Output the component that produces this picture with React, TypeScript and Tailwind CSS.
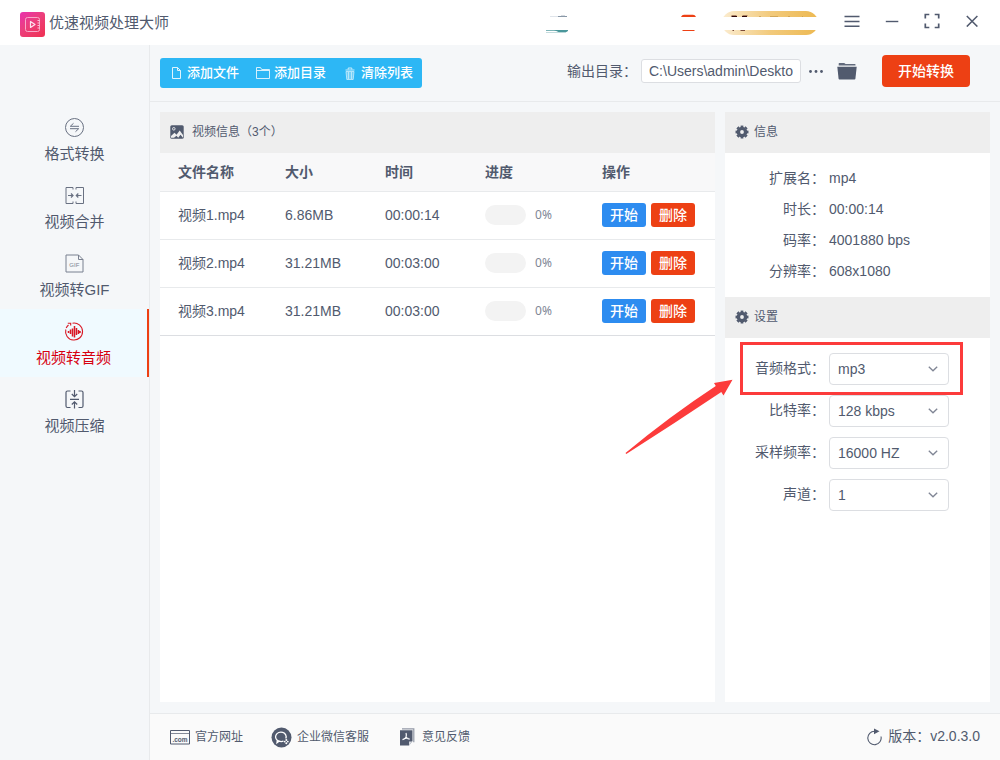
import { useState } from "react"
import type { ReactNode } from "react"
import clsx from "clsx"

const sidebarItems = [
  { name: "格式转换", icon: <ConvertIcon /> },
  { name: "视频合并", icon: <MergeIcon /> },
  { name: "视频转GIF", icon: <GifIcon /> },
  { name: "视频转音频", icon: <AudioIcon /> },
  { name: "视频压缩", icon: <CompressIcon /> },
]

const files = [
  { name: "视频1.mp4", size: "6.86MB", time: "00:00:14", progress: 0 },
  { name: "视频2.mp4", size: "31.21MB", time: "00:03:00", progress: 0 },
  { name: "视频3.mp4", size: "31.21MB", time: "00:03:00", progress: 0 },
]

const info = [
  { label: "扩展名", value: "mp4" },
  { label: "时长", value: "00:00:14" },
  { label: "码率", value: "4001880 bps" },
  { label: "分辨率", value: "608x1080" },
]

const settings = [
  { id: "format", label: "音频格式", options: ["mp3", "wav", "aac", "flac"], highlight: true },
  { id: "bitrate", label: "比特率", options: ["128 kbps", "192 kbps", "320 kbps"] },
  { id: "rate", label: "采样频率", options: ["16000 HZ", "44100 HZ", "48000 HZ"] },
  { id: "channel", label: "声道", options: ["1", "2"] },
]

export default function App() {
  const [active, setActive] = useState("视频转音频")

  return (
    <div className="flex min-h-screen flex-col bg-[#f5f7f9] font-['Liberation_Sans','Noto_Sans_CJK_SC',sans-serif] text-sm text-[#515a6e]">
      <TitleBar />
      <div className="flex flex-1">
        <nav className="w-[150px] shrink-0 border-r border-[#e8eaec] pt-[60px]">
          {sidebarItems.map((item) => (
            <button
              key={item.name}
              onClick={() => setActive(item.name)}
              className={clsx(
                "flex h-[68px] w-full flex-col items-center gap-[5px] pt-3 text-[15px] leading-6",
                active === item.name && "border-r-2 border-[#ed4014] bg-[#f0faff] text-[#d7000f]"
              )}
            >
              {item.icon}
              {item.name}
            </button>
          ))}
        </nav>

        <div className="flex min-w-0 flex-1 flex-col">
          <Toolbar />
          <main className="flex flex-1 gap-2.5 px-2.5 pt-2.5 pb-[11px]">
            <FilePanel />
            <aside className="w-[265px] shrink-0 bg-white">
              <PanelHeader icon={<GearIcon />} gap="gap-[5px]">信息</PanelHeader>
              <dl className="pt-[9px] pb-[11px]">
                {info.map((row) => (
                  <div key={row.label} className="flex h-[31px] items-center gap-1">
                    <dt className="w-[100px] text-right">{row.label}：</dt>
                    <dd>{row.value}</dd>
                  </div>
                ))}
              </dl>
              <PanelHeader icon={<GearIcon />} gap="gap-[5px]">设置</PanelHeader>
              <div className="flex flex-col gap-2.5 pt-[15px]">
                {settings.map((row) => (
                  <SettingRow key={row.id} {...row} />
                ))}
              </div>
            </aside>
          </main>
          <Footer />
        </div>
      </div>
    </div>
  )
}

function TitleBar() {
  return (
    <header className="flex h-[45px] items-center bg-white pr-2 pl-5">
      <Logo />
      <h1 className="ml-1 text-[15px]">优速视频处理大师</h1>
      <HeaderBadges />
      <button aria-label="菜单" className="flex h-10 w-10 items-center justify-center pb-1">
        <svg width="16" height="12" viewBox="0 0 16 12" stroke="currentColor" strokeWidth="1.4">
          <path d="M.5 1.500h15M.5 6.500h15M.5 11.300h15" />
        </svg>
      </button>
      <button aria-label="最小化" className="flex h-10 w-10 items-center justify-center pb-1">
        <svg width="14" height="12" viewBox="0 0 14 12" stroke="currentColor" strokeWidth="1.4">
          <path d="M.8 6.500h12.500" />
        </svg>
      </button>
      <button aria-label="全屏" className="flex h-10 w-10 items-center justify-center pb-1">
        <svg width="16" height="16" viewBox="0 0 16 16" fill="none" stroke="currentColor" strokeWidth="1.7">
          <path d="M1.300 5.500V1.500h4M10.700 1.500h4v4M14.700 10.500v4h-4M5.300 14.500h-4v-4" />
        </svg>
      </button>
      <button aria-label="关闭" className="flex h-10 w-10 items-center justify-center pb-1">
        <svg width="12" height="12" viewBox="0 0 12 12" stroke="currentColor" strokeWidth="1.5">
          <path d="M.8 1l10.600 10.600M11.400 1L.8 11.600" />
        </svg>
      </button>
    </header>
  )
}

// account area: avatar, red tag and gold pill, with a blank strip across them
function HeaderBadges() {
  return (
    <svg className="mr-3.5 ml-auto" width="272" height="24" viewBox="0 0 272 24">
      <defs>
        <linearGradient id="gold">
          <stop offset="0" stopColor="#fbecd0" />
          <stop offset=".5" stopColor="#f2ca7c" />
          <stop offset="1" stopColor="#edb952" />
        </linearGradient>
      </defs>
      <path d="M4 5.500h8" stroke="#dfe4ea" />
      <path d="M12 5.500h9" stroke="#8796a6" />
      <path d="M15 4.700h4" stroke="#a9b4c0" strokeWidth=".6" />
      <path d="M0 19.500h22" stroke="#7fb5b8" />
      <path d="M8 19h14q0 2-3 2.300h-6z" fill="#4a979b" />
      <path d="M0 21.500h20" stroke="#b5d3d5" strokeWidth=".8" />
      <path d="M135 6q1-2.200 3-2.200h9q2 0 3 2.200z" fill="#ed4014" />
      <path d="M136 19h13l-1 1h-11z" fill="#ed4014" />
      <rect x="176" width="96" height="24" rx="12" fill="url(#gold)" />
      <path d="M185.500 4.600h5M196.500 4.600h5" stroke="#8a5a40" strokeWidth=".8" />
      <path d="M185.500 5.500h5.500M196 5.500h5" stroke="#2d0508" />
      <path d="M186.500 19.500h1.500M194.500 19.500h4.500" stroke="#6d3a2c" strokeWidth=".9" />
      <path d="M213 5.500h2M224 5.500h8M242 5.500h2M256 5.500h1" stroke="#c59a4a" strokeWidth=".7" />
      <rect x="170" y="6" width="102" height="13" fill="#fff" />
    </svg>
  )
}

function Toolbar() {
  return (
    <div className="flex h-[57px] items-center justify-between border-b border-[#e8eaec] pr-[30px] pl-2.5">
      <div className="flex h-[30px] items-center rounded-[3px] bg-[#2db7f5] text-[13px] font-medium text-white">
        <button className="flex h-full items-center gap-1.5 pr-2 pl-3">
          <svg width="9" height="12" viewBox="0 0 9 12" fill="none" stroke="currentColor" opacity=".85">
            <path d="M.5.5h5l3 3v8h-8zM5.500.5v3h3" />
          </svg>
          添加文件
        </button>
        <button className="flex h-full items-center gap-1 px-[9px]">
          <svg width="14" height="12" viewBox="0 0 14 12" fill="none" stroke="currentColor" opacity=".8">
            <path d="M.5 11.500V.5h4l1.200 2h7.800v9zM.5 3.500h13" />
          </svg>
          添加目录
        </button>
        <button className="flex h-full items-center gap-1.5 pr-[9px] pl-2.5">
          <svg width="10" height="13" viewBox="0 0 10 13" fill="none" stroke="currentColor" opacity=".75">
            <path d="M.5 3h9M3.200 2.500V1h3.600v1.500" />
            <path d="M1 4.500h8l-.8 8H1.800z" fill="currentColor" fillOpacity=".45" strokeWidth=".8" />
            <path d="M3.500 5v7M6.500 5v7" strokeWidth=".8" />
          </svg>
          清除列表
        </button>
      </div>

      <div className="flex items-center pb-1">
        <label htmlFor="output">输出目录：</label>
        <input
          id="output"
          className="ml-1 h-6 w-40 rounded-[3px] border border-[#dcdee2] bg-white px-[7px] text-sm"
          defaultValue="C:\Users\admin\Deskto"
        />
        <button aria-label="更多" className="ml-[7px]">
          <svg width="16" height="4" viewBox="0 0 16 4" fill="currentColor">
            <circle cx="2.500" cy="2.500" r="1.400" />
            <circle cx="8" cy="2.500" r="1.400" />
            <circle cx="13.500" cy="2.500" r="1.400" />
          </svg>
        </button>
        <button aria-label="打开目录" className="ml-[13px]">
          <svg width="20" height="18" viewBox="0 0 20 18" fill="currentColor">
            <path d="M1.700 3.500V1.500Q1.700 1 2.200 1h5L8.600 2H18q.5 0 .5.5v1z" opacity=".9" />
            <path d="M.3 4.700h19.400L18.400 16.700q-.1.700-.8.700H2.400q-.7 0-.8-.7z" />
          </svg>
        </button>
        <button className="ml-[25px] h-8 w-[88px] rounded bg-[#ed4014] font-medium text-white">开始转换</button>
      </div>
    </div>
  )
}

function PanelHeader({ icon, gap, children }: { icon: ReactNode; gap: string; children: ReactNode }) {
  return (
    <h2 className={clsx("flex h-[41px] items-center bg-[#eee] px-2.5 pb-0.5 text-xs", gap)}>
      {icon}
      {children}
    </h2>
  )
}

function FilePanel() {
  return (
    <section className="min-w-0 flex-1 bg-white">
      <PanelHeader icon={<PictureIcon />} gap="gap-2">
        <span>视频信息（{files.length}个）</span>
      </PanelHeader>
      <table className="w-full table-fixed text-left">
        <colgroup>
          <col className="w-[107px]" />
          <col className="w-[100px]" />
          <col className="w-[100px]" />
          <col className="w-[117px]" />
          <col />
        </colgroup>
        <thead>
          <tr className="h-[38px] border-b border-[#e8eaec] bg-[#f8f8f9]">
            {["文件名称", "大小", "时间", "进度", "操作"].map((title) => (
              <th key={title} className="pl-[18px] font-bold">{title}</th>
            ))}
          </tr>
        </thead>
        <tbody>
          {files.map((file) => (
            <tr key={file.name} className="h-12 border-b border-[#e8eaec] last:border-[#dcdee2]">
              <td className="pl-[18px]">{file.name}</td>
              <td className="pl-[18px]">{file.size}</td>
              <td className="pl-[18px]">{file.time}</td>
              <td className="pl-[18px]">
                <div className="flex items-center gap-[9px]">
                  <div className="h-5 w-[41px] overflow-hidden rounded-full bg-[#f3f3f3]">
                    <div className="h-full bg-[#2d8cf0]" style={{ width: `${file.progress}%` }} />
                  </div>
                  <span className="font-['Noto_Sans',sans-serif] text-xs text-[#808695]">{file.progress}%</span>
                </div>
              </td>
              <td className="pl-[18px]">
                <div className="flex gap-[5px] font-medium text-white">
                  <button className="h-6 w-11 rounded-[3px] bg-[#2d8cf0]">开始</button>
                  <button className="h-6 w-11 rounded-[3px] bg-[#ed4014]">删除</button>
                </div>
              </td>
            </tr>
          ))}
        </tbody>
      </table>
    </section>
  )
}

type SettingRowProps = { id: string; label: string; options: string[]; highlight?: boolean }

function SettingRow({ id, label, options, highlight }: SettingRowProps) {
  return (
    <div className="relative flex items-center gap-1">
      <label htmlFor={id} className="w-[100px] pb-0.5 text-right">{label}：</label>
      <div className="relative">
        <select
          id={id}
          className="h-8 w-[120px] appearance-none rounded border border-[#dcdee2] bg-white px-2 text-sm"
        >
          {options.map((option) => (
            <option key={option}>{option}</option>
          ))}
        </select>
        <svg className="pointer-events-none absolute top-3 right-2.5" width="12" height="8" viewBox="0 0 12 8" fill="none" stroke="#808695" strokeWidth="1.300">
          <path d="M1.800 1.700L6 5.800l4.200-4.100" />
        </svg>
      </div>
      {highlight && (
        <div className="pointer-events-none absolute -top-[11px] -bottom-2.5 right-[27px] left-[15px] z-10 border-3 border-[#fc3b3b]">
          {/* arrow pointing at the box */}
          <svg className="absolute top-[34px] right-full mr-2.5" width="108" height="76" viewBox="0 0 108 76" fill="#fc3b3b">
            <path d="M107.500.8L89 4l1.800 3Q45 37 .5 74l.8 1Q50 44 96.300 13l2.200 3.500z" />
          </svg>
        </div>
      )}
    </div>
  )
}

function Footer() {
  return (
    <footer className="flex h-[47px] items-center border-t border-[#e8eaec] bg-[#fafafa] px-5 text-xs">
      <a href="#site" className="flex items-center gap-[5px]">
        <svg width="20" height="16" viewBox="0 0 20 16" fill="none" stroke="currentColor">
          <path d="M.5 1.500h19v13.500H.5z" />
          <path d="M.5 4.500h19" opacity=".7" />
          <text x="10" y="12.500" textAnchor="middle" fontSize="6.500" fontWeight="bold" fill="currentColor" stroke="none">.com</text>
        </svg>
        官方网址
      </a>
      <a href="#service" className="ml-7 flex items-center gap-[5px]">
        <svg width="21" height="21" viewBox="0 0 21 21" fill="none">
          <circle cx="10.500" cy="10.500" r="10" fill="currentColor" />
          <path d="M14.800 11.500A5.300 4.700 0 1 0 8 14.200l-2 1.600.3-2.400M8 14.200q2.200.8 4.500 0" stroke="#fff" strokeWidth="1.300" />
          <circle cx="15.300" cy="12.900" r="1" fill="#fff" />
          <circle cx="13.700" cy="14.600" r=".9" fill="#fff" />
          <circle cx="16.800" cy="14.600" r=".9" fill="#fff" />
          <circle cx="15.300" cy="16.200" r="1" fill="#fff" />
        </svg>
        企业微信客服
      </a>
      <a href="#feedback" className="ml-[30px] flex items-center gap-[7px]">
        <svg width="16" height="18" viewBox="0 0 16 18" fill="none">
          <path d="M3 .8h11.800v13.500" stroke="#9298a6" strokeWidth="1.200" />
          <path d="M1 2.200h12.500v10.800l-3.500 4.500H1z" fill="currentColor" />
          <path d="M10 17.500v-4h3.500z" fill="#d5d8de" />
          <path d="M7 5q.8 2.500 0 4.200T3.500 11.700M7 9q1 1.800 3.700 2.200M5 10.700q2-.8 4.200-.4" stroke="#fff" strokeWidth="1.200" />
        </svg>
        意见反馈
      </a>
      <button className="ml-auto flex items-center gap-1.5 pb-0.5 text-sm">
        <svg className="mt-0.5" width="15" height="18" viewBox="0 0 15 18" fill="none" stroke="currentColor" strokeWidth="1.100">
          <path d="M14 8.500a6.700 6.700 0 1 1-6.300-5.200" />
          <path d="M7 .5l5.500 2.800-5.500 3z" fill="currentColor" stroke="none" />
        </svg>
        版本：v2.0.3.0
      </button>
    </footer>
  )
}

function Logo() {
  return (
    <svg className="mt-1" width="25" height="25" viewBox="0 0 25 25" fill="none">
      <defs>
        <linearGradient id="logo" x1="0" y1="0" x2=".8" y2="1">
          <stop offset="0" stopColor="#e832ae" />
          <stop offset=".5" stopColor="#ec3f7c" />
          <stop offset="1" stopColor="#ef3358" />
        </linearGradient>
      </defs>
      <rect width="25" height="25" rx="3" fill="url(#logo)" />
      <rect x="5.500" y="5.500" width="14" height="14" rx="2" stroke="#f9a9c9" />
      <path d="M10.500 9.500v6l4.500-3z" stroke="#fde3ee" strokeWidth="1.200" strokeLinejoin="round" />
      <path d="M17.500 8.500h2M17.500 11h2M17.500 13.500h2M17.500 16h2" stroke="#fbc4d9" />
    </svg>
  )
}

function ConvertIcon() {
  return (
    <svg width="20" height="20" viewBox="0 0 20 20" fill="none" stroke="currentColor" opacity=".85">
      <circle cx="9.500" cy="10.500" r="9" />
      <path d="M14 9.300H5.300l3.200-3M5 11.700h8.700l-3.200 3" />
    </svg>
  )
}

function MergeIcon() {
  return (
    <svg width="20" height="20" viewBox="0 0 20 20" fill="none" stroke="currentColor" opacity=".85">
      <path d="M8 4.500v-2H1v16h7v-2M11 4.500v-2h7.500v16H11v-2" />
      <path d="M3 10.500h4.800M6 8.500l2 2-2 2M16.500 10.500h-5M13.300 8.500l-2 2 2 2" strokeWidth="1.200" />
    </svg>
  )
}

function GifIcon() {
  return (
    <svg width="20" height="20" viewBox="0 0 20 20" fill="none" stroke="currentColor" opacity=".75">
      <path d="M1 2h12.500l4.500 4.500V19H1zM13.500 2v4.500H18" />
      <text x="9.300" y="14" textAnchor="middle" fontSize="6" fill="currentColor" stroke="none">GIF</text>
    </svg>
  )
}

function AudioIcon() {
  return (
    <svg width="20" height="20" viewBox="0 0 20 20" fill="none" stroke="currentColor" strokeWidth="1.100" opacity=".9">
      <path d="M8.500 2.200A8.500 8.500 0 1 1 1.800 8.500" />
      <path d="M2.200 7A9 9 0 0 1 4.500 4M3.800 2.200h2.900v2.300" />
      <path d="M4.500 10v2M6.500 8.500v4.500M8.500 7.500v8M10.500 5v11.500M12.500 7v7M14.500 9v4M16 10v2" strokeWidth="1.500" />
    </svg>
  )
}

function CompressIcon() {
  return (
    <svg width="20" height="20" viewBox="0 0 20 20" fill="none" stroke="currentColor" strokeWidth="1.200">
      <path d="M5.500 2H2.500Q1 2 1 3.500V17q0 1.500 1.500 1.500h3M13.500 2h3Q18 2 18 3.500V17q0 1.500-1.500 1.500h-3" />
      <path d="M5 10.300h9M9.500 1v6.500M6.800 5l2.700 2.700L12.200 5M9.500 19.500V13M6.800 15.500l2.700-2.700 2.700 2.700" />
    </svg>
  )
}

function PictureIcon() {
  return (
    <svg width="14" height="14" viewBox="0 0 14 14">
      <rect x=".3" y=".3" width="13.400" height="13.400" rx="1.500" fill="currentColor" />
      <circle cx="3.800" cy="3.800" r="1.300" fill="none" stroke="#eee" strokeWidth=".9" />
      <path d="M1 12.700V11l3.500-3.300 2 2L9.700 5.500 13 10v2.700l-2.500-3-2.300 3-1.700-2-2.500 2z" fill="#eee" />
    </svg>
  )
}

function GearIcon() {
  return (
    <svg width="14" height="14" viewBox="0 0 14 14" fill="none" stroke="currentColor">
      <circle cx="7" cy="7" r="3.600" strokeWidth="3.400" />
      <circle cx="7" cy="7" r="5.700" strokeWidth="1.600" pathLength="16" strokeDasharray="1.300 .7" strokeDashoffset=".65" />
    </svg>
  )
}
